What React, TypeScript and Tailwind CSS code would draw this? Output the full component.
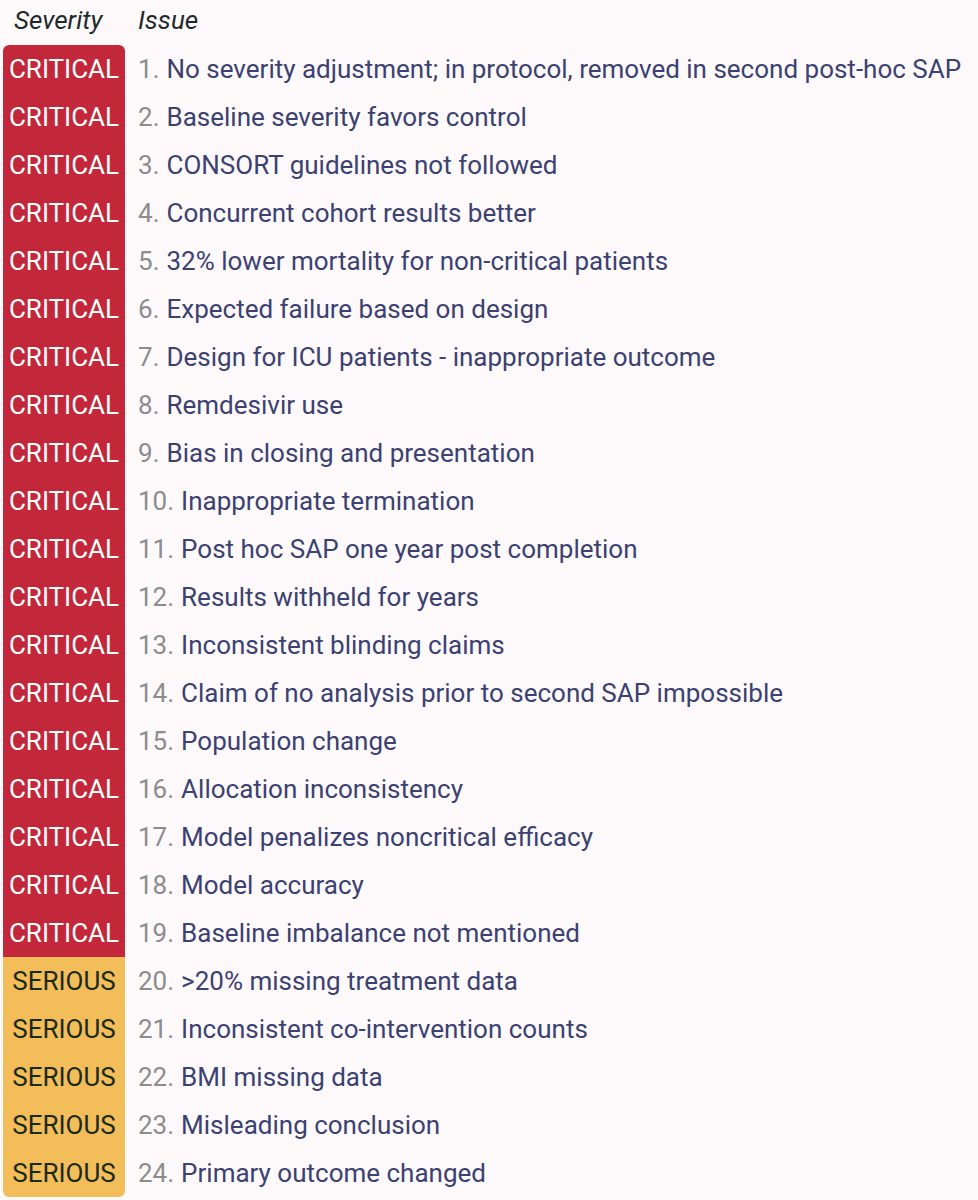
import React from "react";

const issues: [string, string][] = [
  ["CRITICAL", "No severity adjustment; in protocol, removed in second post-hoc SAP"],
  ["CRITICAL", "Baseline severity favors control"],
  ["CRITICAL", "CONSORT guidelines not followed"],
  ["CRITICAL", "Concurrent cohort results better"],
  ["CRITICAL", "32% lower mortality for non-critical patients"],
  ["CRITICAL", "Expected failure based on design"],
  ["CRITICAL", "Design for ICU patients - inappropriate outcome"],
  ["CRITICAL", "Remdesivir use"],
  ["CRITICAL", "Bias in closing and presentation"],
  ["CRITICAL", "Inappropriate termination"],
  ["CRITICAL", "Post hoc SAP one year post completion"],
  ["CRITICAL", "Results withheld for years"],
  ["CRITICAL", "Inconsistent blinding claims"],
  ["CRITICAL", "Claim of no analysis prior to second SAP impossible"],
  ["CRITICAL", "Population change"],
  ["CRITICAL", "Allocation inconsistency"],
  ["CRITICAL", "Model penalizes noncritical efficacy"],
  ["CRITICAL", "Model accuracy"],
  ["CRITICAL", "Baseline imbalance not mentioned"],
  ["SERIOUS", ">20% missing treatment data"],
  ["SERIOUS", "Inconsistent co-intervention counts"],
  ["SERIOUS", "BMI missing data"],
  ["SERIOUS", "Misleading conclusion"],
  ["SERIOUS", "Primary outcome changed"],
];

export default function App() {
  return (
    <div className="min-h-[1200px] w-[978px] bg-[#fdf9fb] font-['Roboto',sans-serif] text-[26px]">
      <div className="flex h-[45px] items-end pb-[5px] text-[26px] italic text-[#1f2a2c]">
        <div className="w-[138px] pl-[14px]">Severity</div>
        <div>Issue</div>
      </div>
      <div className="ml-[3px] flex">
        <div className="flex w-[122px] flex-col overflow-hidden rounded-[6px]">
          {issues.map(([sev], i) => (
            <div
              key={i}
              className={`flex h-[48px] items-center justify-center ${
                sev === "CRITICAL" ? "bg-[#c2283a] text-white" : "bg-[#f3bd5a] text-[#1a2a1c]"
              }`}
            >
              {sev}
            </div>
          ))}
        </div>
        <div className="ml-[13px] flex flex-col">
          {issues.map(([, text], i) => (
            <div key={i} className="flex h-[48px] items-center whitespace-nowrap text-[#3b4170]">
              <span className="mr-[7px] text-[#8c8c8c]">{i + 1}.</span>
              {text}
            </div>
          ))}
        </div>
      </div>
    </div>
  );
}
